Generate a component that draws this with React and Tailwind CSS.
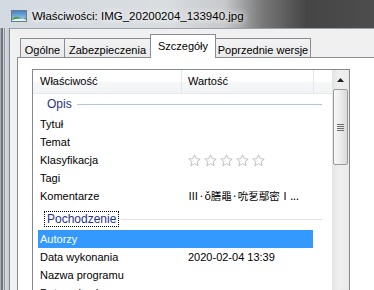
import React from "react";

const rowsOpis = [
    { label: "Tytuł" },
    { label: "Temat" },
    { label: "Klasyfikacja", stars: true },
    { label: "Tagi" },
    { label: "Komentarze", value: "Ⅲ·ǒ膳黽·吮乭鄢密Ⅰ...", cjk: true },
];

const rowsPochodzenie = [
    { label: "Autorzy", selected: true },
    { label: "Data wykonania", value: "2020-02-04 13:39" },
    { label: "Nazwa programu" },
    { label: "Data nabycia" },
];

function PictureIcon() {
    return (
        <svg width="16" height="12" viewBox="0 0 16 12">
            <defs>
                <linearGradient id="sky" x1="0" y1="0" x2="0" y2="1">
                    <stop offset="0" stopColor="#3f7fc4" />
                    <stop offset="1" stopColor="#a9d4f0" />
                </linearGradient>
            </defs>
            <rect x="0.5" y="0.5" width="15" height="11" fill="url(#sky)" stroke="#6b7b8c" />
            <path d="M1 9 Q5 5 9 8 T15 7 V11 H1 Z" fill="#4e9a3e" />
            <path d="M1 10 Q6 8 15 9.5 V11 H1 Z" fill="#e8f2f8" />
        </svg>
    );
}

function Stars() {
    return (
        <div className="flex gap-[3px]">
            {[0, 1, 2, 3, 4].map((i) => (
                <svg key={i} width="13" height="13" viewBox="0 0 13 13">
                    <path
                        d="M6.5 0.8 L8.2 4.6 L12.2 5 L9.2 7.7 L10.1 11.8 L6.5 9.7 L2.9 11.8 L3.8 7.7 L0.8 5 L4.8 4.6 Z"
                        fill="#ffffff"
                        stroke="#b9b9b9"
                        strokeWidth="0.9"
                        strokeLinejoin="round"
                    />
                </svg>
            ))}
        </div>
    );
}

function GroupRow({ label, focused, tall, lineColor }) {
    return (
        <div
            className={`flex items-end pb-[3px] pl-[11px] pr-[10px] ${
                tall ? "h-[25px]" : "h-[21px]"
            }`}
        >
            <div className="flex items-center flex-1 h-[16px]">
                <span
                    className={`h-[16px] flex items-center px-[2px] text-[#1e3287] text-[12px] border ${
                        focused ? "border-dotted border-black" : "border-transparent"
                    }`}
                >
                    {label}
                </span>
                <div className={`ml-[2px] flex-1 h-px ${lineColor}`} />
            </div>
        </div>
    );
}

function PropRow({ label, value, stars, cjk, selected }) {
    return (
        <div
            className={`ml-[5px] w-[275px] h-[18px] flex items-center ${
                selected ? "bg-[#3399ff] text-white" : "text-black"
            }`}
        >
            <div className="w-[150px] pl-[2px] whitespace-nowrap">{label}</div>
            <div
                className={`whitespace-nowrap ${
                    cjk
                        ? "font-['Noto_Sans_CJK_JP','Liberation_Sans',sans-serif] text-[10.5px]"
                        : ""
                }`}
            >
                {stars ? <Stars /> : value}
            </div>
        </div>
    );
}

export default function App() {
    const tabs = [
        { label: "Ogólne", w: "w-[45px]" },
        { label: "Zabezpieczenia", w: "w-[87px]" },
        { label: "Szczegóły", w: "w-[66px]", active: true },
        { label: "Poprzednie wersje", w: "w-[96px]" },
    ];

    return (
        <div className="w-[374px] h-[290px] overflow-hidden flex flex-col font-['Liberation_Sans',Arial,sans-serif] text-[11px] bg-[#c9d0d7]">
            {/* title bar */}
            <div className="h-[28px] shrink-0 flex items-start pt-[10px] pl-[11px] bg-[linear-gradient(to_right,#d3dae1_0%,#d9dde0_45%,#c6c8ca_60%,#7a7a7a_70%,#454545_82%,#4d4d4d_100%)]">
                <PictureIcon />
                <span className="ml-[5px] -mt-[1px] text-[11.5px] text-black leading-[14px] [text-shadow:0_0_6px_#ffffff,0_0_10px_#ffffff]">
                    Właściwości: IMG_20200204_133940.jpg
                </span>
            </div>

            <div className="flex flex-1 min-h-0">
                {/* left window frame */}
                <div className="w-[10px] shrink-0 bg-[linear-gradient(to_right,#a9b0b8_0px,#a9b0b8_1px,#6f747a_1px,#6f747a_3px,#cfd6dd_3px,#cfd6dd_4px,#8d9298_4px,#8d9298_5px,#d6dde4_5px,#c3cad1_9px,#858a90_9px,#858a90_10px)]" />

                {/* client area */}
                <div className="flex-1 flex flex-col bg-[#f0f0f0] border-t border-[#9aa3ac] pt-[5px] pl-[7px] min-w-0">
                    {/* tabs */}
                    <div className="h-[23px] shrink-0 flex items-end pl-[3px]">
                        {tabs.map((t, i) =>
                            t.active ? (
                                <div
                                    key={t.label}
                                    className={`${t.w} shrink-0 -ml-px h-[24px] -mb-px relative z-10 bg-white border border-b-0 border-[#898c95] flex justify-center pt-[3px] text-[11px] whitespace-nowrap`}
                                >
                                    {t.label}
                                </div>
                            ) : (
                                <div
                                    key={t.label}
                                    className={`${t.w} shrink-0 ${
                                        i > 0 ? "-ml-px" : ""
                                    } h-[19px] bg-[linear-gradient(to_bottom,#f3f3f3,#e9e9e9)] border border-b-0 border-[#898c95] flex justify-center pt-[3px] text-[11px] whitespace-nowrap`}
                                >
                                    {t.label}
                                </div>
                            )
                        )}
                    </div>

                    {/* tab panel */}
                    <div className="flex-1 bg-white border-t border-l border-[#898c95] pt-[11px] pl-[14px]">
                        <div className="w-[318px] h-[260px] border border-[#828790] flex">
                            {/* list content */}
                            <div className="w-[299px] flex flex-col">
                                <div className="h-[24px] flex border-b border-[#e5e8ec] bg-[linear-gradient(to_bottom,#ffffff_0%,#ffffff_50%,#f5f6f8_51%,#f3f4f6_100%)] text-black">
                                    <div className="w-[149px] border-r border-[#e3e6ea] pl-[7px] flex items-center">
                                        Właściwość
                                    </div>
                                    <div className="w-[132px] border-r border-[#e3e6ea] pl-[6px] flex items-center">
                                        Wartość
                                    </div>
                                    <div className="flex-1" />
                                </div>

                                <GroupRow label="Opis" lineColor="bg-[#b4c4dd]" />
                                {rowsOpis.map((r) => (
                                    <PropRow key={r.label} {...r} />
                                ))}
                                <GroupRow label="Pochodzenie" focused tall lineColor="bg-[#dfe4eb]" />
                                {rowsPochodzenie.map((r) => (
                                    <PropRow key={r.label} {...r} />
                                ))}
                            </div>

                            {/* scrollbar */}
                            <div className="w-[17px] flex flex-col bg-[linear-gradient(to_right,#e3e3e3,#efefef_40%,#eaeaea)]">
                                <div className="h-[19px] flex items-center justify-center">
                                    <svg width="7" height="4" viewBox="0 0 7 4">
                                        <path d="M3.5 0 L7 4 H0 Z" fill="#1f1f1f" />
                                    </svg>
                                </div>
                                <div className="mx-[1px] h-[76px] rounded-[2px] border border-[#9b9b9b] bg-[linear-gradient(to_right,#f7f7f7,#ececec_50%,#d9d9d9)] flex flex-col items-center justify-center gap-[1px]">
                                    <div className="w-[7px] h-px bg-[#6d6d6d]" />
                                    <div className="w-[7px] h-px bg-[#6d6d6d]" />
                                    <div className="w-[7px] h-px bg-[#6d6d6d]" />
                                    <div className="w-[7px] h-px bg-[#6d6d6d]" />
                                </div>
                            </div>
                        </div>
                    </div>
                </div>
            </div>
        </div>
    );
}
